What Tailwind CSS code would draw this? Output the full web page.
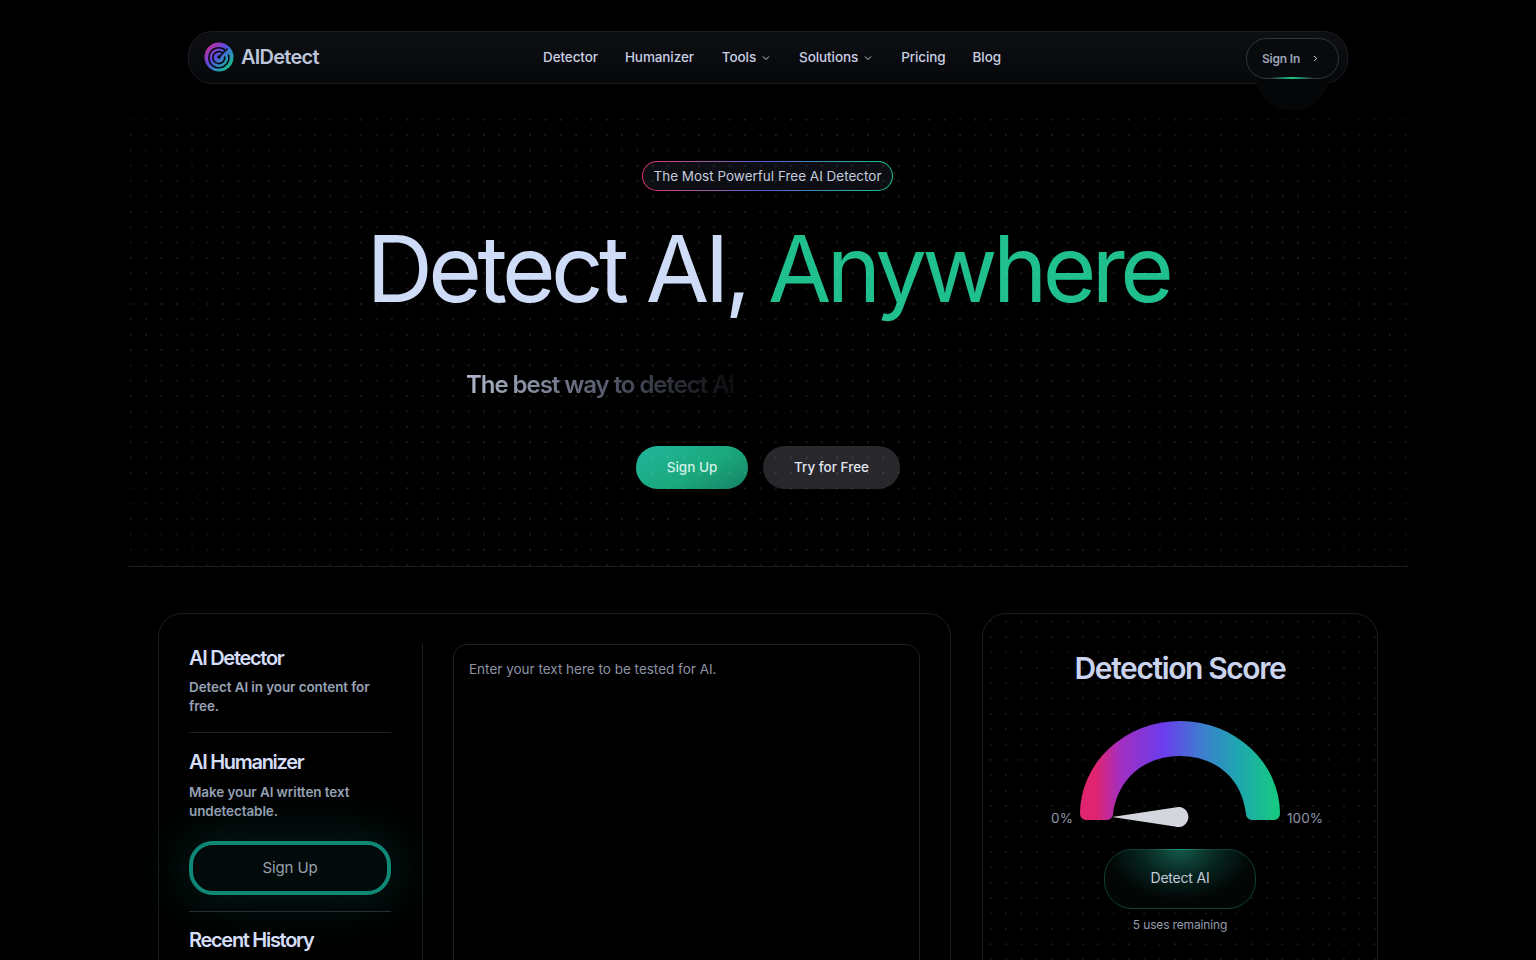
<!DOCTYPE html>
<html lang="en">

<head>
    <meta charset="UTF-8">
    <meta name="viewport" content="width=device-width, initial-scale=1.0">
    <title>AIDetect</title>
    <script src="https://cdn.jsdelivr.net/npm/@tailwindcss/browser@4"></script>
</head>

<body class="bg-black h-[960px] overflow-hidden font-['Inter','Noto_Sans',sans-serif]">
    <!-- Nav -->
    <header class="mt-[31px] mx-auto w-[1160px] h-[53px] rounded-[24px] border border-[#1b1c21] bg-gradient-to-b from-[#0e0f13] to-[#07080a] flex items-center pl-[15px] pr-2 relative">
        <div class="flex items-center gap-[7px] w-[339px] mb-[1px]">
            <svg width="30" height="30" viewBox="0 0 30 30">
                <defs>
                    <linearGradient id="logoGrad" x1="0.1" y1="0.05" x2="0.95" y2="0.85">
                        <stop offset="0" stop-color="#d02a90" />
                        <stop offset="0.42" stop-color="#5b4ae0" />
                        <stop offset="0.7" stop-color="#2a8fc0" />
                        <stop offset="1" stop-color="#17c57f" />
                    </linearGradient>
                </defs>
                <circle cx="15" cy="15" r="14.5" fill="url(#logoGrad)" />
                <g fill="none" stroke="#0a0b10" stroke-width="1.6" stroke-linecap="round">
                    <path d="M20.5 7.5A10 10 0 1 0 24.5 13" />
                    <path d="M18 10.5A6 6 0 1 0 20.8 15" />
                    <path d="M15 15L23 7" />
                </g>
                <circle cx="15" cy="15" r="1.7" fill="#0a0b10" />
            </svg>
            <span class="text-[20px] font-semibold tracking-[-0.75px] text-[#bcc5da]">AIDetect</span>
        </div>
        <nav class="flex items-center gap-[27px] text-[13.5px] font-medium tracking-[-0.1px] text-[#c8d0e4] mb-[1px]">
            <a>Detector</a>
            <a>Humanizer</a>
            <a class="flex items-center gap-[6px] ml-[1px]">Tools
                <svg width="8" height="8" viewBox="0 0 8 8" fill="none" stroke="currentColor" stroke-width="1" class="mt-[2px] mr-[2px]"><path d="M1 2.5L4 5.5L7 2.5" /></svg>
            </a>
            <a class="flex items-center gap-[6px]">Solutions
                <svg width="8" height="8" viewBox="0 0 8 8" fill="none" stroke="currentColor" stroke-width="1" class="mt-[2px] mr-[2px]"><path d="M1 2.5L4 5.5L7 2.5" /></svg>
            </a>
            <a>Pricing</a>
            <a>Blog</a>
        </nav>
        <div class="ml-auto relative mt-[2px]">
            <div class="absolute left-[10px] top-[4px] w-[73px] h-[68px] rounded-full bg-[#050608]"></div>
            <button class="relative w-[93px] h-[41px] rounded-[21px] border border-[#33363d] bg-[#090a0d] flex items-center pl-[15px] gap-[13px] text-[12px] font-semibold tracking-[-0.2px] text-[#9ca3b8]">
                <span class="mt-[1px]">Sign In</span>
                <svg width="5" height="7" viewBox="0 0 5 7" fill="none" stroke="#c4cad6" stroke-width="1"><path d="M1 1L3.8 3.5L1 6" /></svg>
            </button>
            <div class="absolute left-[24px] bottom-0 w-[44px] h-[2px] bg-gradient-to-r from-transparent via-[#1fc488] to-transparent"></div>
        </div>
    </header>

    <!-- Hero -->
    <section class="relative mt-[28px] mx-auto w-[1282px] h-[455px] border-b border-[#1a1b20] flex flex-col items-center pt-[49px]">
        <div class="p-px rounded-full mr-[1px] bg-gradient-to-r from-[#e0246f] via-[#4a5fd0] to-[#17c58a]">
            <div class="h-[28px] w-[249px] rounded-full bg-[#0c0e13] flex items-center justify-center text-[13.5px] text-[#c3cbdf]">The Most Powerful Free AI Detector</div>
        </div>
        <h1 class="mt-[21px] text-[92px] leading-[114px] tracking-[-4.6px] font-normal text-[#cfdcf7]">Detect AI, <span class="text-[#1fc08d]">Anywhere</span></h1>
        <div class="mt-[43px] w-[600px] h-[32px]">
            <p class="inline-block -ml-[2px] text-[24px] leading-[32px] font-semibold tracking-[-1.05px] bg-gradient-to-r from-[#b0b8cc] via-[#5a5f70] to-[#0c0d10] bg-clip-text text-transparent">The best way to detect AI</p>
        </div>
        <div class="mt-[45px] flex gap-[15px]">
            <button class="w-[112px] h-[43px] pb-[1px] rounded-full bg-[linear-gradient(150deg,#22b59d_0%,#1aa97d_55%,#178a6a_90%,#1a6f6a_100%)] text-[13.5px] font-medium text-[#d4efe6]">Sign Up</button>
            <button class="w-[137px] h-[43px] pb-[1px] rounded-full bg-[#27272c] text-[13.5px] font-medium text-[#e2e6f0]">Try for Free</button>
        </div>
        <!-- dot grid sits over the hero content -->
        <div class="absolute inset-0 pointer-events-none bg-[radial-gradient(circle,rgba(255,255,255,0.14)_0.6px,transparent_0.9px)] bg-[size:15.36px_15.36px] bg-[position:-4px_0px] [mask-image:radial-gradient(ellipse_75%_85%_at_50%_50%,black_60%,rgba(0,0,0,0.45)_100%)]"></div>
    </section>

    <!-- Cards -->
    <div class="mt-[46px] mx-auto w-[1220px] flex gap-[31px]">
        <section class="w-[793px] h-[600px] rounded-[24px] border border-[#1c1d21] p-[30px] flex shrink-0">
            <aside class="w-[234px] pr-[31px] border-r border-[#1f2024] shrink-0">
                <h2 class="text-[20px] leading-[28px] font-semibold tracking-[-1.3px] text-[#d5def8]">AI Detector</h2>
                <p class="mt-[6px] text-[13.5px] leading-[19px] font-semibold tracking-[-0.1px] text-[#98a1b5]">Detect AI in your content for free.</p>
                <div class="mt-[16px] h-px bg-[#1d1e22]"></div>
                <h2 class="mt-[15px] text-[20px] leading-[28px] font-semibold tracking-[-1.3px] text-[#d5def8]">AI Humanizer</h2>
                <p class="mt-[7px] text-[13.5px] leading-[19px] font-semibold tracking-[-0.1px] text-[#98a1b5]">Make your AI written text undetectable.</p>
                <button class="mt-[20px] w-full h-[54px] rounded-[24px] border-4 border-[#0f8878] bg-[#030a0a] text-[15px] tracking-[-0.1px] text-[#9aa1ae] shadow-[0_0_45px_14px_rgba(16,120,105,0.18)]">Sign Up</button>
                <div class="mt-[16px] h-px bg-[#2a2b2e]"></div>
                <h2 class="mt-[14px] text-[20px] leading-[28px] font-semibold tracking-[-1.3px] text-[#d5def8]">Recent History</h2>
            </aside>
            <div class="ml-[30px] w-[469px] h-[500px] rounded-[14px] border border-[#1f2024] px-[15px] py-[15px] text-[13.5px] leading-[19px] text-[#8d93a3]">Enter your text here to be tested for AI.</div>
        </section>

        <section class="w-[396px] h-[600px] rounded-[24px] border border-[#1c1d21] flex flex-col items-center pt-[36px] bg-[radial-gradient(circle,rgba(255,255,255,0.13)_0.6px,transparent_0.9px)] bg-[size:15.36px_15.36px]">
            <h2 class="text-[30px] leading-[36px] font-semibold tracking-[-1.4px] text-[#cbd4ee]">Detection Score</h2>
            <div class="mt-[35px] flex items-end justify-center gap-[7px] -mx-4">
                <span class="w-[50px] text-right text-[13.5px] leading-[18px] text-[#8f96a6] tracking-[0.1px] mb-[-6px]">0%</span>
                <svg width="200" height="100" viewBox="0 0 200 100" class="overflow-visible">
                    <defs>
                        <linearGradient id="gaugeGrad" x1="0" y1="0" x2="1" y2="0">
                            <stop offset="0.08" stop-color="#e0246f" />
                            <stop offset="0.2" stop-color="#a32fc0" />
                            <stop offset="0.42" stop-color="#6a3ded" />
                            <stop offset="0.6" stop-color="#3f7bd0" />
                            <stop offset="0.78" stop-color="#1fa4b2" />
                            <stop offset="0.97" stop-color="#17c784" />
                        </linearGradient>
                    </defs>
                    <path d="M0 93A100 93 0 0 1 200 93A6 6 0 0 1 194 99H172A6 6 0 0 1 166 93C162 56 134 35 100 35C66 35 38 56 33 93A6 6 0 0 1 27 99H6A6 6 0 0 1 0 93Z" fill="url(#gaugeGrad)" />
                    <path d="M32 96L95 86.6A10 10 0 1 1 95 105.4Z" fill="#d3d6dc" />
                </svg>
                <span class="w-[50px] text-left text-[13.5px] leading-[18px] text-[#8f96a6] tracking-[0.1px] mb-[-6px]">100%</span>
            </div>
            <button class="relative mt-[28px] w-[152px] h-[60px] pb-[3px] rounded-[28px] border border-[#0e4034] bg-[radial-gradient(ellipse_48%_85%_at_50%_0%,#14584a_0%,#07241f_55%,#020706_100%)] text-[14px] tracking-[-0.2px] text-[#c3cad8]">
                Detect AI
                <span class="absolute left-[40px] right-[40px] -top-px h-px bg-gradient-to-r from-transparent via-[#1f9a74] to-transparent"></span>
            </button>
            <p class="mt-[8px] text-[12px] leading-[16px] tracking-[-0.15px] text-[#969cac]">5 uses remaining</p>
        </section>
    </div>
</body>

</html>
